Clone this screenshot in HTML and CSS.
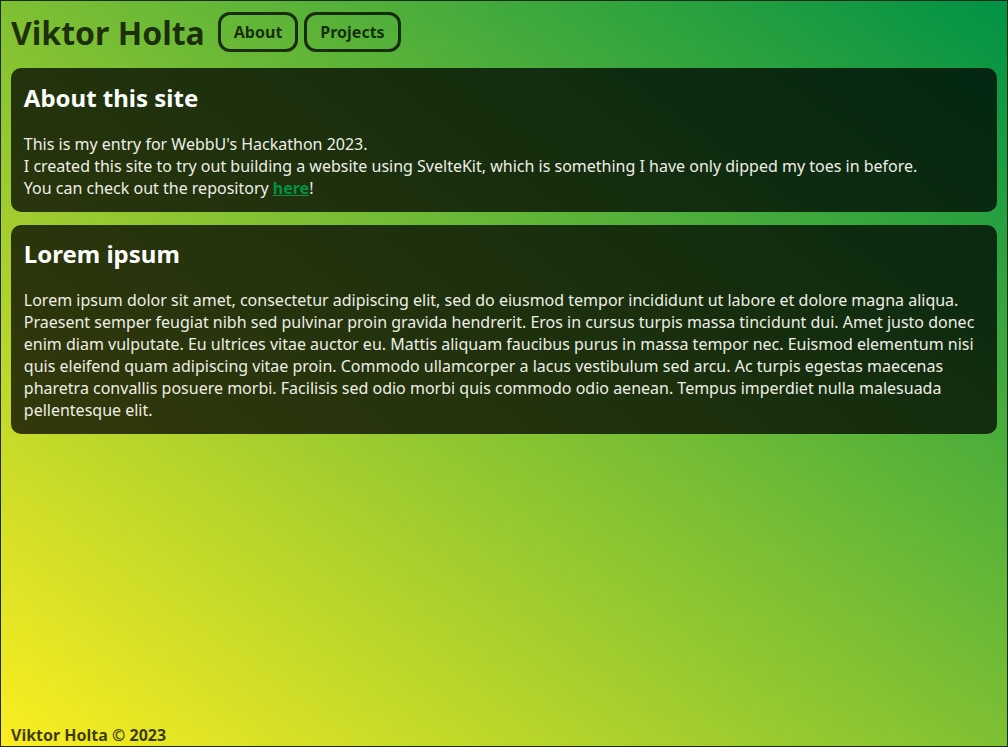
FILE: index.html
```html
<!DOCTYPE html>
<html lang="en">
<head>
<meta charset="utf-8">
<title>Viktor Holta</title>
<link rel="stylesheet" href="styles.css">
</head>
<body>
<div class="page">
  <header class="top">
    <h1 class="title">Viktor Holta</h1>
    <nav class="nav">
      <a class="btn" href="#">About</a>
      <a class="btn" href="#">Projects</a>
    </nav>
  </header>
  <main class="content">
    <section class="card">
      <h2 class="card-title">About this site</h2>
      <p class="card-text">This is my entry for WebbU's Hackathon 2023.<br>I created this site to try out building a website using SvelteKit, which is something I have only dipped my toes in before.<br>You can check out the repository <a class="link" href="#">here</a>!</p>
    </section>
    <section class="card">
      <h2 class="card-title">Lorem ipsum</h2>
      <p class="card-text">Lorem ipsum dolor sit amet, consectetur adipiscing elit, sed do eiusmod tempor incididunt ut labore et dolore magna aliqua. Praesent semper feugiat nibh sed pulvinar proin gravida hendrerit. Eros in cursus turpis massa tincidunt dui. Amet justo donec enim diam vulputate. Eu ultrices vitae auctor eu. Mattis aliquam faucibus purus in massa tempor nec. Euismod elementum nisi quis eleifend quam adipiscing vitae proin. Commodo ullamcorper a lacus vestibulum sed arcu. Ac turpis egestas maecenas pharetra convallis posuere morbi. Facilisis sed odio morbi quis commodo odio aenean. Tempus imperdiet nulla malesuada pellentesque elit.</p>
    </section>
  </main>
  <footer class="foot">Viktor Holta © 2023</footer>
</div>
</body>
</html>
```
FILE: styles.css
```css
html, body {
  margin: 0;
  height: 100%;
}
body {
  font-family: "Noto Sans", "DejaVu Sans", sans-serif;
  font-size: 16px;
  background: linear-gradient(to top right, #fcee21, #009245);
}
.page {
  box-sizing: border-box;
  min-height: 100vh;
  border: 1px solid #1c2a18;
  padding: 0 10px;
  display: flex;
  flex-direction: column;
}
.top {
  display: flex;
  align-items: flex-start;
  gap: 13px;
  padding-top: 10px;
  margin-bottom: 14px;
}
.title {
  margin: 0;
  font-size: 32px;
  font-weight: 700;
  color: rgba(0, 0, 0, 0.75);
}
.nav {
  display: flex;
  gap: 6px;
  margin-top: 1px;
}
.btn {
  display: block;
  padding: 6px 13px;
  border: 3px solid rgba(0, 0, 0, 0.75);
  border-radius: 12px;
  color: rgba(0, 0, 0, 0.75);
  font-weight: 700;
  text-decoration: none;
  line-height: 22px;
}
.content {
  display: flex;
  flex-direction: column;
  gap: 13px;
}
.card {
  background: rgba(0, 0, 0, 0.74);
  border-radius: 10px;
  padding: 0.8em;
  color: #eeeee6;
}
.card-title {
  margin: 0 0 19px;
  font-size: 24px;
  font-weight: 700;
  color: #fff;
}
.card-text {
  margin: 0;
  line-height: 22px;
}
.link {
  color: #009245;
  font-weight: 700;
}
.foot {
  margin-top: auto;
  font-weight: 700;
  color: rgba(0, 0, 0, 0.75);
  line-height: 21px;
}
```
